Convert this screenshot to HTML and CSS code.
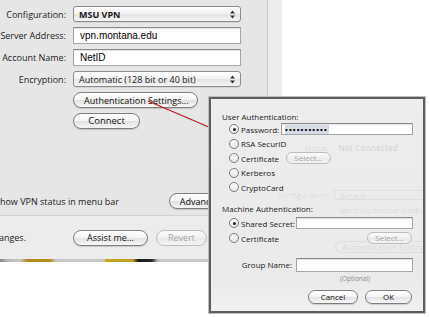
FILE: index.html
```html
<!DOCTYPE html>
<html lang="en">
<head>
  <meta charset="UTF-8">
  <meta name="viewport" content="width=device-width, initial-scale=1">
  <title>VPN Settings</title>
  <link rel="stylesheet" href="styles.css">
</head>
<body>

<div class="window">
  <div class="pane">
    <div class="form">
      <label class="lbl">Configuration:</label>
      <div class="popup strong"><span>MSU VPN</span><svg class="arrows" width="5" height="9" viewBox="0 0 5 9"><path d="M0 3.5L2.5 0.5L5 3.5Z M0 5.5L2.5 8.5L5 5.5Z" fill="#333"/></svg></div>

      <label class="lbl">Server Address:</label>
      <div class="field">vpn.montana.edu</div>

      <label class="lbl">Account Name:</label>
      <div class="field">NetID</div>

      <label class="lbl">Encryption:</label>
      <div class="popup"><span>Automatic (128 bit or 40 bit)</span><svg class="arrows" width="5" height="9" viewBox="0 0 5 9"><path d="M0 3.5L2.5 0.5L5 3.5Z M0 5.5L2.5 8.5L5 5.5Z" fill="#333"/></svg></div>

      <span></span>
      <div class="cell"><button class="btn auth">Authentication Settings...</button></div>

      <span></span>
      <div class="cell"><button class="btn connect">Connect</button></div>
    </div>

    <div class="menu-row">
      <label class="check"><span class="box"></span>Show VPN status in menu bar</label>
      <button class="btn">Advanced...</button>
    </div>
  </div>

  <div class="actions">
    <div class="lock-text"><span>Click the lock to prevent further changes.</span></div>
    <button class="btn assist">Assist me...</button>
    <button class="btn revert" disabled>Revert</button>
  </div>

  <div class="desk"></div>
</div>

<!-- callout from the button to the sheet -->
<svg class="callout" width="430" height="317" viewBox="0 0 430 317">
  <line x1="148" y1="101" x2="211" y2="128" stroke="#c4161c" stroke-width="1.3"/>
</svg>

<div class="sheet">
  <!-- pane showing faintly through the sheet -->
  <div class="ghost">
    <div class="g-status">Status:<b>Not Connected</b></div>
    <div class="g-config"><span class="g-lbl">Configuration:</span><span class="g-box">Default</span></div>
    <div class="g-value">vpn.msu.montana.edu</div>
    <div class="g-btn">Authentication Settings...</div>
  </div>

  <div class="sheet-body">
    <div class="sec">User Authentication:</div>
    <div class="opts">
      <div class="opt"><span class="radio on"></span>Password:<div class="field small pw"><span class="sel">•••••••••••</span></div></div>
      <div class="opt"><span class="radio"></span>RSA SecurID</div>
      <div class="opt"><span class="radio"></span>Certificate<button class="btn sm pick" disabled>Select...</button></div>
      <div class="opt"><span class="radio"></span>Kerberos</div>
      <div class="opt"><span class="radio"></span>CryptoCard</div>
    </div>

    <div class="sec machine">Machine Authentication:</div>
    <div class="opts wide">
      <div class="opt"><span class="radio on"></span>Shared Secret:<div class="field small secret"></div></div>
      <div class="opt"><span class="radio"></span>Certificate<button class="btn sm pick right" disabled>Select...</button></div>
    </div>

    <div class="group">
      <label>Group Name:</label>
      <div class="field small secret"></div>
    </div>
    <div class="hint">(Optional)</div>

    <div class="sheet-btns">
      <button class="btn sm cancel">Cancel</button>
      <button class="btn sm ok">OK</button>
    </div>
  </div>
</div>

</body>
</html>
```

FILE: styles.css
```css
body {
  margin: 0;
  padding: 0;
  width: 430px;
  height: 317px;
  overflow: hidden;
  position: relative;
  background: #fff;
  font-family: 'Open Sans', 'DejaVu Sans', sans-serif;
  font-size: 9px;
  color: #1a1a1a;
}

.window {
  width: 282px;
  background: #ececec;
}

.pane {
  width: 267px;
  height: 215px;
  background: #e6e6e6;
  border-right: 1px solid #c9c9c9;
  border-bottom: 1px solid #d2d2d2;
  display: flex;
  flex-direction: column;
}

.form {
  display: grid;
  grid-template-columns: 66px 168px;
  column-gap: 7px;
  row-gap: 5px;
  padding-top: 6px;
  align-items: center;
}

.lbl {
  text-align: right;
  white-space: nowrap;
  font-size: 9px;
  color: #222;
}

.popup {
  height: 14px;
  border: 1px solid #8c8c8c;
  border-radius: 3px;
  background: linear-gradient(#ffffff, #f2f2f2 50%, #e4e4e4 51%, #f4f4f4);
  box-shadow: 0 1px 0 rgba(0, 0, 0, 0.08);
  display: flex;
  align-items: center;
  justify-content: space-between;
  padding: 0 5px 0 5px;
  font-size: 9px;
}

.popup.strong span {
  font-weight: 700;
}

.arrows {
  display: block;
}

.field {
  height: 15px;
  border: 1px solid #a5a5a5;
  border-top-color: #8a8a8a;
  background: #fff;
  box-shadow: inset 0 1px 1px rgba(0, 0, 0, 0.12);
  display: flex;
  align-items: center;
  padding: 0 6px;
  font-family: 'Liberation Sans', Arial, sans-serif;
  font-size: 10px;
  color: #000;
}

.cell {
  display: flex;
}

.btn {
  height: 16px;
  padding: 0 10px;
  border: 1px solid #7f7f7f;
  border-radius: 8px;
  background: linear-gradient(#ffffff, #f4f4f4 50%, #e2e2e2 51%, #f7f7f7);
  box-shadow: 0 1px 1px rgba(0, 0, 0, 0.15);
  font-family: 'Open Sans', 'DejaVu Sans', sans-serif;
  font-size: 9px;
  color: #111;
  line-height: 1;
  white-space: nowrap;
}

.btn:disabled {
  color: #a8a8a8;
  border-color: #bdbdbd;
  box-shadow: none;
  background: linear-gradient(#fbfbfb, #f0f0f0 50%, #e8e8e8 51%, #f4f4f4);
}

.auth {
  width: 125px;
}

.connect {
  width: 67px;
  font-size: 9.5px;
}

.menu-row {
  margin-top: auto;
  margin-bottom: 6px;
  height: 16px;
  display: flex;
  align-items: center;
  justify-content: space-between;
  padding-right: 28px;
}

.check {
  display: flex;
  align-items: center;
  gap: 4px;
  margin-left: -21px;
  white-space: nowrap;
  font-size: 9px;
}

.check .box {
  width: 10px;
  height: 10px;
  border: 1px solid #888;
  border-radius: 2px;
  background: #fff;
}

.actions {
  height: 43px;
  display: flex;
  align-items: center;
  gap: 8px;
}

.lock-text {
  width: 26px;
  display: flex;
  justify-content: flex-end;
  overflow: hidden;
  white-space: nowrap;
  font-size: 9px;
  margin-right: 39px;
}

.assist {
  width: 75px;
}

.revert {
  width: 51px;
}

.desk {
  height: 3px;
  background: linear-gradient(90deg, #8a8590 0, #b9b6b3 8px, #c9c9c9 20px, #b08a1c 27px, #b3901f 50px, #c8c8c8 56px, #c8c8c8 104px, #c9a21e 106px, #c2a020 133px, #1a1a1a 138px, #2a2a2a 152px, #c8c8c8 158px, #c8c8c8 282px);
}

.callout {
  position: absolute;
  left: 0;
  top: 0;
  pointer-events: none;
}

/* sheet dialog */
.sheet {
  position: absolute;
  left: 209px;
  top: 97px;
  width: 212px;
  height: 212px;
  border: 2px solid #5e5e5e;
  background: linear-gradient(#ededed, #eaeaea 85%, #f0f0f0);
  box-shadow: 0 0 0 1px #bdbdbd;
}

.ghost {
  position: absolute;
  inset: 0;
  display: flex;
  flex-direction: column;
  align-items: flex-start;
  padding-top: 44px;
  color: rgba(0, 0, 0, 0.1);
  font-size: 8px;
  white-space: nowrap;
  overflow: hidden;
}

.ghost > div {
  height: 10px;
  line-height: 10px;
}

.g-status {
  margin-left: 93px;
  display: flex;
  gap: 9px;
}

.g-config {
  margin-top: 37px;
  margin-left: 66px;
  display: flex;
  gap: 7px;
}

.g-lbl {
  width: 50px;
  text-align: right;
}

.g-box {
  width: 84px;
  padding-left: 4px;
  border: 1px solid rgba(0, 0, 0, 0.05);
}

.g-value {
  margin-top: 5px;
  margin-left: 127px;
}

.g-btn {
  margin-top: 26px;
  margin-left: 124px;
  padding: 0 6px;
  border: 1px solid rgba(0, 0, 0, 0.05);
  border-radius: 6px;
}

.sheet-body {
  position: relative;
  display: flex;
  flex-direction: column;
  padding: 12px 10px 0 11px;
  font-size: 8px;
  color: #1a1a1a;
}

.sec {
  height: 11px;
  line-height: 11px;
  white-space: nowrap;
}

.sec.machine {
  margin-top: 8px;
  margin-bottom: 2px;
}

.opts {
  padding-left: 7px;
}

.opt {
  height: 14.5px;
  display: flex;
  align-items: center;
  white-space: nowrap;
}

.opts.wide .opt {
  height: 15px;
}

.radio {
  width: 8px;
  height: 8px;
  border: 1px solid #7a7a7a;
  border-radius: 50%;
  background: linear-gradient(#ffffff, #e6e6e6);
  margin-right: 2px;
  display: flex;
  align-items: center;
  justify-content: center;
}

.radio.on::after {
  content: '';
  width: 3px;
  height: 3px;
  border-radius: 50%;
  background: #222;
}

.field.small {
  height: 10px;
  margin-left: auto;
  padding: 0 3px;
}

.pw {
  width: 124px;
}

.secret {
  width: 109px;
}

.sel {
  background: #d5dbe4;
  font-size: 8px;
  letter-spacing: 1.1px;
  line-height: 9px;
  padding-right: 1px;
}

.btn.sm {
  height: 12px;
  font-size: 8px;
  border-radius: 6px;
  padding: 0 6px;
}

.pick {
  margin-left: 7px;
  width: 45px;
}

.pick.right {
  margin-left: auto;
  margin-right: 1px;
}

.group {
  margin-top: 12px;
  height: 14px;
  display: flex;
  align-items: center;
  justify-content: flex-end;
  gap: 4px;
}

.group .field {
  margin-left: 0;
  height: 12px;
}

.hint {
  margin-top: 2px;
  width: 116px;
  align-self: flex-end;
  text-align: center;
  font-size: 6.5px;
  color: #8a8a8a;
  height: 10px;
  line-height: 10px;
}

.sheet-btns {
  margin-top: 6px;
  display: flex;
  justify-content: flex-end;
  gap: 7px;
  padding-right: 1px;
}

.btn.cancel {
  width: 50px;
  height: 14px;
  border-radius: 7px;
}

.btn.ok {
  width: 47px;
  height: 14px;
  border-radius: 7px;
}
```
